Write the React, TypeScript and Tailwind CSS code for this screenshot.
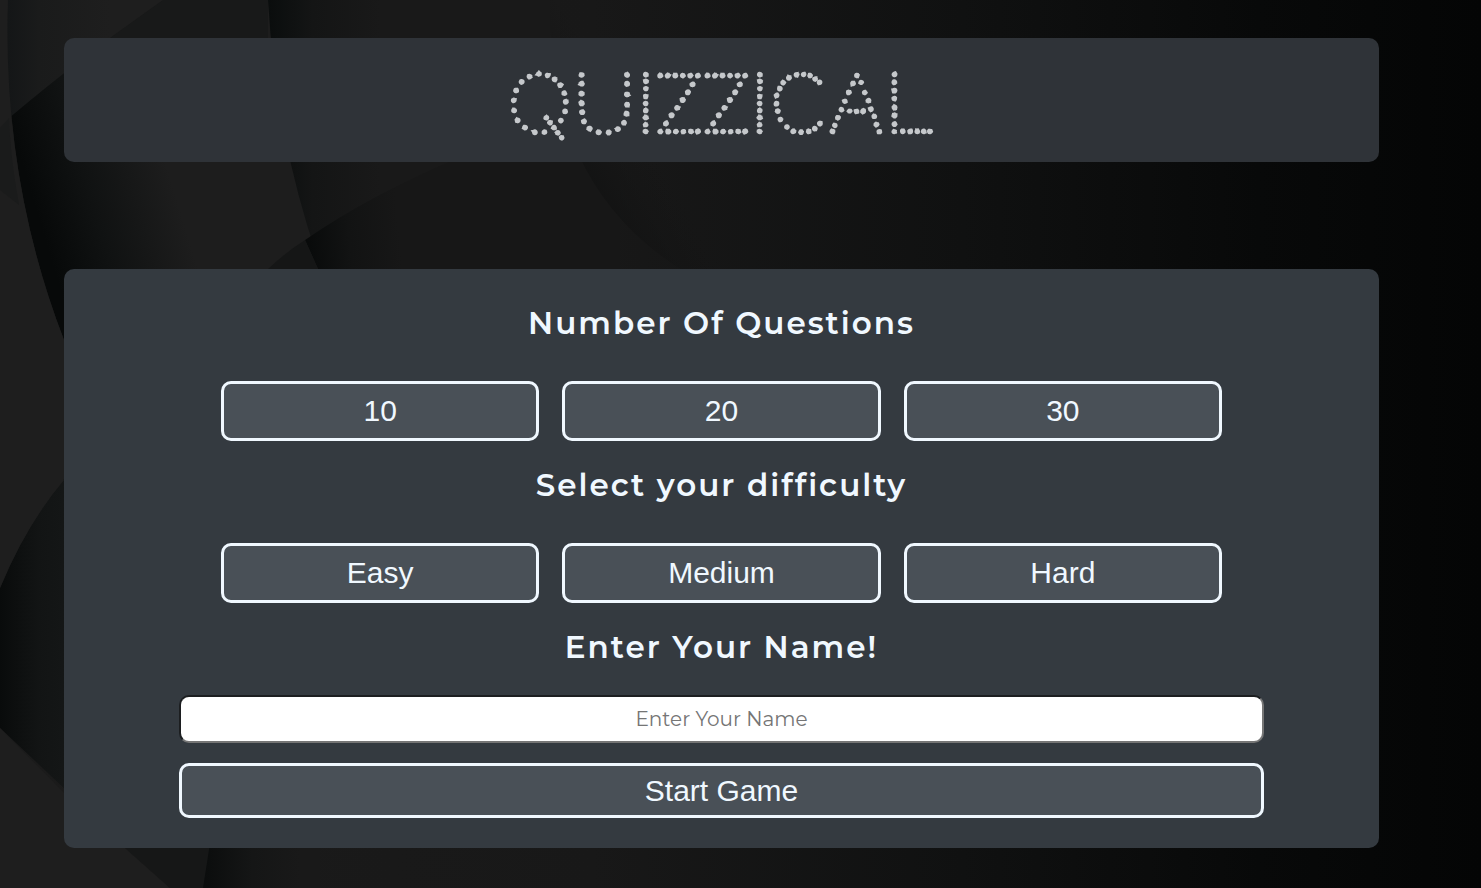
import { useState } from "react";

const counts = ["10", "20", "30"];
const levels = ["Easy", "Medium", "Hard"];

function Backdrop() {
  return (
    <svg
      aria-hidden="true"
      viewBox="0 0 1481 888"
      preserveAspectRatio="none"
      className="absolute inset-0 -z-10 h-full w-full"
    >
      <defs>
        <linearGradient id="base" x1="0" x2="1">
          <stop offset="0" stopColor="#1b1b1b" />
          <stop offset="0.4" stopColor="#181818" />
          <stop offset="0.65" stopColor="#101111" />
          <stop offset="0.85" stopColor="#080909" />
          <stop offset="1" stopColor="#040505" />
        </linearGradient>
        <linearGradient id="leafA" gradientUnits="userSpaceOnUse" x1="18" x2="150" y1="150" y2="110">
          <stop offset="0" stopColor="#070909" />
          <stop offset="0.4" stopColor="#101212" />
          <stop offset="1" stopColor="#1d1d1d" />
        </linearGradient>
        <linearGradient id="leafTop" gradientUnits="userSpaceOnUse" x1="8" x2="110" y1="0" y2="0">
          <stop offset="0" stopColor="#141617" />
          <stop offset="0.3" stopColor="#1a1b1b" />
          <stop offset="1" stopColor="#1e1e1e" />
        </linearGradient>
        <linearGradient id="leafB" gradientUnits="userSpaceOnUse" x1="268" x2="380" y1="0" y2="0">
          <stop offset="0" stopColor="#0a0d0d" />
          <stop offset="0.4" stopColor="#141515" />
          <stop offset="1" stopColor="#191919" />
        </linearGradient>
        <linearGradient id="leafC" gradientUnits="userSpaceOnUse" x1="300" x2="400" y1="250" y2="240">
          <stop offset="0" stopColor="#070909" />
          <stop offset="0.5" stopColor="#121313" />
          <stop offset="1" stopColor="#171717" />
        </linearGradient>
        <linearGradient id="leafD" gradientUnits="userSpaceOnUse" x1="590" x2="670" y1="230" y2="180">
          <stop offset="0" stopColor="#101111" />
          <stop offset="1" stopColor="#151515" stopOpacity="0" />
        </linearGradient>
        <linearGradient id="leafE" gradientUnits="userSpaceOnUse" x1="0" x2="75" y1="0" y2="0">
          <stop offset="0" stopColor="#090b0b" />
          <stop offset="0.5" stopColor="#121414" />
          <stop offset="1" stopColor="#151717" />
        </linearGradient>
        <linearGradient id="leafF" gradientUnits="userSpaceOnUse" x1="205" x2="300" y1="0" y2="0">
          <stop offset="0" stopColor="#0b0d0d" />
          <stop offset="0.5" stopColor="#151616" />
          <stop offset="1" stopColor="#191919" />
        </linearGradient>
      </defs>
      <rect width="1481" height="888" fill="url(#base)" />
      <path d="M268 0Q264 140 318 269H440L560 150V0Z" fill="url(#leafB)" />
      <path d="M8 0Q2 180 64 340H350Q278 180 268 0Z" fill="url(#leafA)" />
      <path d="M8 0Q5 60 9 118Q90 50 163 0Z" fill="url(#leafTop)" />
      <path d="M163 0L110 38H268V0Z" fill="#181919" />
      <path d="M0 0H8Q2 180 64 340V500H0Z" fill="#1e1e1e" />
      <path d="M0 128L9 118Q10 155 19 205L0 190Z" fill="#1a1b1b" />
      <path d="M305 240Q370 195 460 157H620V269H318Z" fill="url(#leafC)" />
      <path d="M268 269Q286 252 305 240L318 269Z" fill="#151616" />
      <path d="M550 0Q546 190 690 275H740V0Z" fill="url(#leafD)" />
      <path d="M64 479Q26 525 0 588V728L170 888H260V479Z" fill="url(#leafE)" />
      <path d="M0 480H64Q26 525 0 588Z" fill="#1e1e1e" />
      <path d="M0 728L64 793L125 848L170 888H0Z" fill="#1e1e1e" />
      <path d="M125 848H210L203 888H170Z" fill="#161717" />
      <path d="M212 830L203 888H320V830Z" fill="url(#leafF)" />
    </svg>
  );
}

type ChoicesProps = {
  title: string;
  options: string[];
  value: string;
  onChange: (next: string) => void;
};

function Choices({ title, options, value, onChange }: ChoicesProps) {
  return (
    <section className="mb-6">
      <h2 className="mb-[38px] text-center font-[Montserrat,Inter,sans-serif] text-[31px] leading-10 font-semibold tracking-[2px]">
        {title}
      </h2>
      <div className="grid grid-cols-3 gap-[23px] px-[42px]">
        {options.map((option) => (
          <button
            key={option}
            type="button"
            aria-pressed={value === option}
            onClick={() => onChange(option)}
            className="h-[60px] rounded-[10px] border-3 border-[#f0f8ff] bg-[#495057] text-[30px] leading-none"
          >
            {option}
          </button>
        ))}
      </div>
    </section>
  );
}

export default function App() {
  const [count, setCount] = useState("");
  const [level, setLevel] = useState("");
  const [name, setName] = useState("");

  return (
    <div className="relative isolate min-h-screen bg-[#101111] pt-[38px] pr-[102px] pb-10 pl-16 font-['Liberation_Sans',Arial,sans-serif] text-[#f0f8ff]">
      <Backdrop />
      <header className="mb-[107px] rounded-[10px] bg-[#2f3338] pt-[17px] pb-[7px]">
        <h1 className="text-center font-[Codystar,'Raleway_Dots',sans-serif] text-[80px] leading-[100px] font-bold tracking-[2px] text-[#c5c8cb]">
          QUIZZICAL
        </h1>
      </header>
      <main className="rounded-[10px] bg-[#343a40] px-[115px] pt-[34px] pb-[30px]">
        <form onSubmit={(event) => event.preventDefault()}>
          <Choices title="Number Of Questions" options={counts} value={count} onChange={setCount} />
          <Choices title="Select your difficulty" options={levels} value={level} onChange={setLevel} />
          <label
            htmlFor="player"
            className="mb-7 block text-center font-[Montserrat,Inter,sans-serif] text-[31px] leading-10 font-semibold tracking-[2px]"
          >
            Enter Your Name!
          </label>
          <input
            id="player"
            type="text"
            value={name}
            onChange={(event) => setName(event.target.value)}
            placeholder="Enter Your Name"
            className="mb-5 block h-12 w-full rounded-[10px] border-2 border-t-[#1c1e20] border-r-[#767676] border-b-[#767676] border-l-[#1c1e20] bg-white text-center font-[Montserrat,Inter,sans-serif] text-[20px] font-normal text-black placeholder:text-[#757575]"
          />
          <button
            type="submit"
            className="block h-[55px] w-full rounded-[10px] border-3 border-[#f0f8ff] bg-[#495057] text-[30px] leading-none"
          >
            Start Game
          </button>
        </form>
      </main>
    </div>
  );
}
